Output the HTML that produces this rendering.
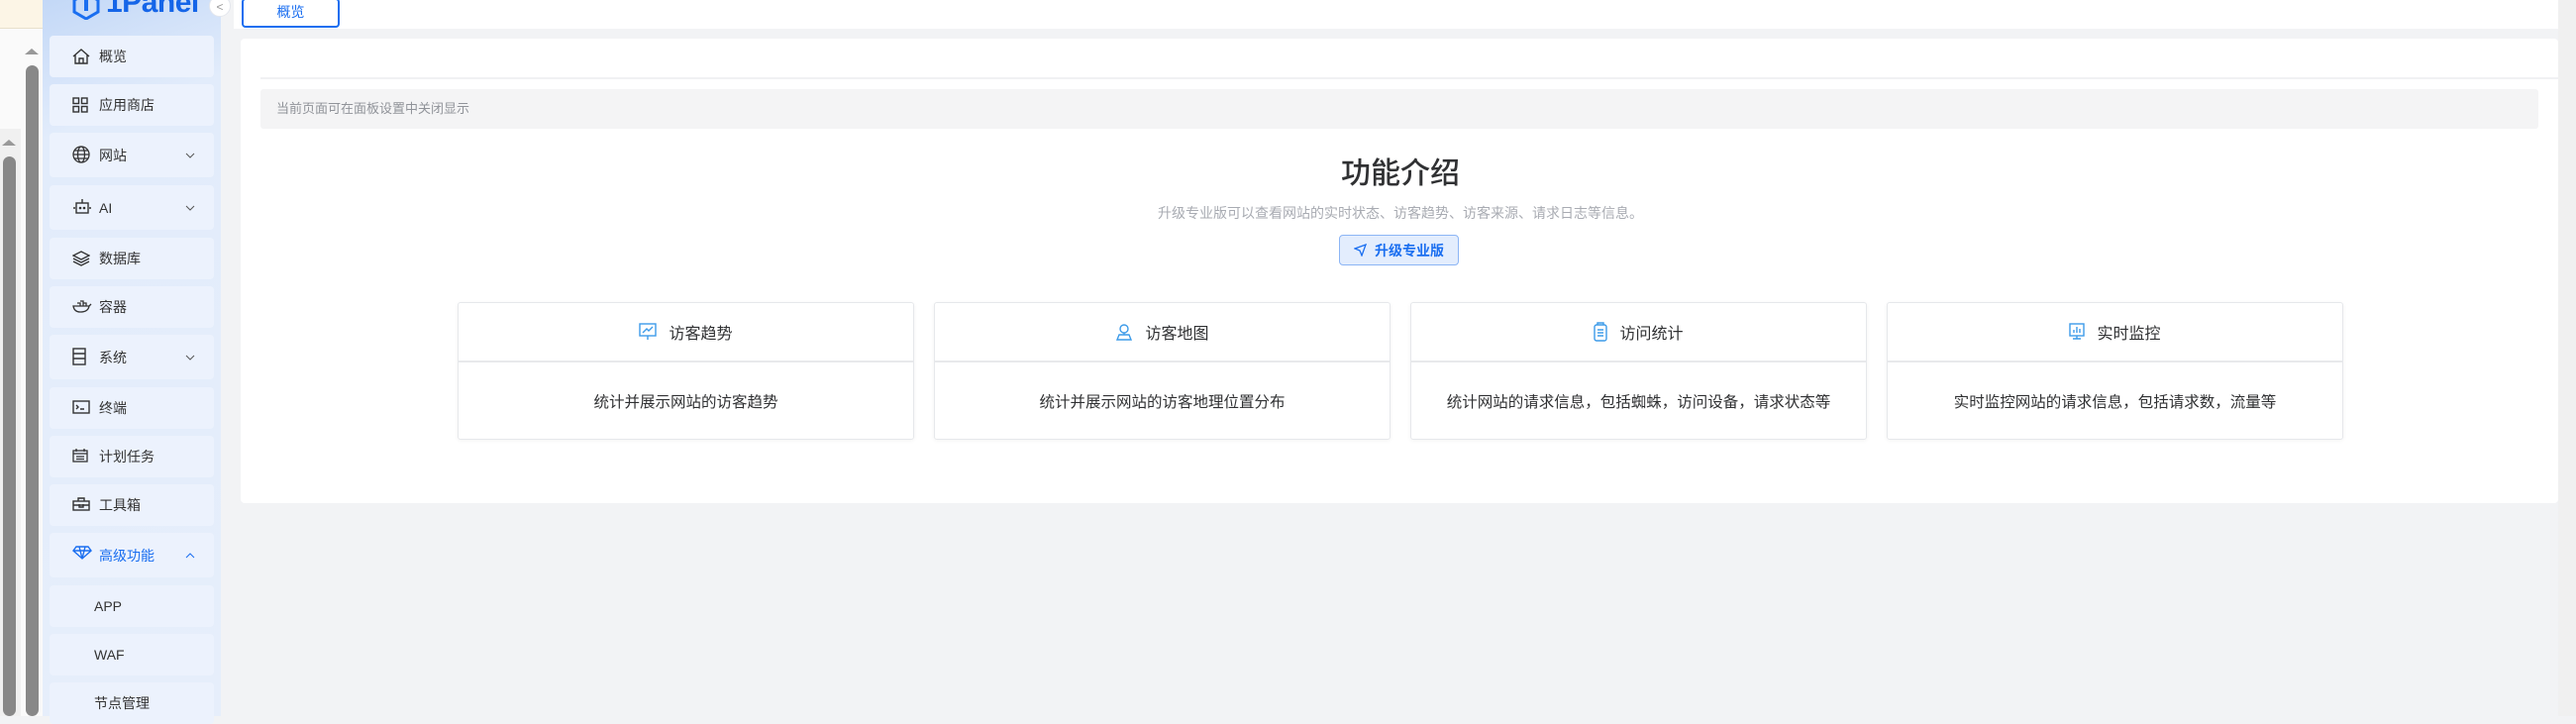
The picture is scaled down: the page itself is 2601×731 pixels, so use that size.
<!DOCTYPE html>
<html><head><meta charset="utf-8"><style>
*{margin:0;padding:0;box-sizing:border-box}
body{width:2601px;height:723px;overflow:hidden;background:#f2f3f5;font-family:"Liberation Sans","Noto Sans CJK SC",sans-serif;position:relative}
.abs{position:absolute}
.side{left:43px;top:0;width:180px;height:723px;background:linear-gradient(160deg,#c3d8f7 0%,#e2ecfb 18%,#e6eefb 100%)}
.item{position:absolute;left:7px;width:166px;height:42px;background:#ecf2fd;border-radius:4px;font-size:14px;color:#333;display:flex;align-items:center}
.item svg{position:absolute;left:23px;top:13px}
.item span{position:absolute;left:50px}
.item svg.chev{position:absolute;left:137px;top:20px}
.card{background:#fff;border:1px solid #e6e8eb;border-radius:3px;box-shadow:0 1px 4px rgba(0,0,0,.05)}
.fc{position:absolute;top:305px;width:461px;height:139px}
.fc .h{height:60px;border-bottom:2px solid #e8e9eb;display:flex;align-items:center;justify-content:center;font-size:16px;color:#303133}
.fc .h svg{margin-right:12px}
.fc .b{height:77px;display:flex;align-items:center;justify-content:center;font-size:15.5px;color:#303133}
</style></head><body>
<div class="abs" style="left:0;top:0;width:43px;height:723px;background:#fafafa"></div>
<div class="abs" style="left:0;top:0;width:43px;height:29px;background:#fcf5e6;border-bottom:1px solid #e8e0cc"></div>
<div class="abs" style="left:0;top:130px;width:21px;height:593px;background:#f0f0f0"></div>
<div class="abs" style="left:3px;top:158px;width:13px;height:565px;background:#888;border-radius:7px"></div>
<div class="abs" style="left:2px;top:141px;width:0;height:0;border-left:7px solid transparent;border-right:7px solid transparent;border-bottom:6px solid #999"></div>
<div class="abs" style="left:26px;top:66px;width:13px;height:657px;background:#888;border-radius:7px"></div>
<div class="abs" style="left:25px;top:49px;width:0;height:0;border-left:7px solid transparent;border-right:7px solid transparent;border-bottom:6px solid #999"></div>
<div class="abs side">
 <svg class="abs" style="left:30px;top:-6px" width="28" height="26" viewBox="0 0 28 26"><path d="M14 0 L26 6 V18 L14 25 L2 18 V6Z" fill="none" stroke="#1a6ef0" stroke-width="3"/><rect x="12" y="5" width="4" height="12" fill="#1a6ef0"/></svg>
 <div class="abs" style="left:64px;top:-14px;font-size:30px;font-weight:bold;color:#1565e8;letter-spacing:-.5px">1Panel</div>
 <div class="item" style="top:36px"><svg width="18" height="16" viewBox="0 0 18 16" fill="none" stroke="#333" stroke-width="1.4"><path d="M1 8L9 1L17 8M3 6V15H15V6M7 15V10H11V15"/></svg><span>概览</span></div>
 <div class="item" style="top:85px"><svg width="16" height="16" viewBox="0 0 16 16" fill="none" stroke="#333" stroke-width="1.4"><rect x="1" y="1" width="5.5" height="5.5"/><rect x="9.5" y="1" width="5.5" height="5.5"/><rect x="1" y="9.5" width="5.5" height="5.5"/><rect x="9.5" y="9.5" width="5.5" height="5.5"/></svg><span>应用商店</span></div>
 <div class="item" style="top:134px;height:45px"><svg width="18" height="18" viewBox="0 0 18 18" fill="none" stroke="#333" stroke-width="1.3"><circle cx="9" cy="9" r="8"/><ellipse cx="9" cy="9" rx="3.5" ry="8"/><path d="M1 9H17M2 5H16M2 13H16"/></svg><span>网站</span><svg class="chev" width="10" height="6" viewBox="0 0 10 6" fill="none" stroke="#555"><path d="M1 1L5 5L9 1"/></svg></div>
 <div class="item" style="top:187px;height:45px"><svg width="20" height="16" viewBox="0 0 20 16" fill="none" stroke="#333" stroke-width="1.4"><rect x="4" y="5" width="12" height="10"/><path d="M10 1V5M1 10H3M17 10H19"/><circle cx="8" cy="10" r=".6" fill="#333"/><circle cx="12" cy="10" r=".6" fill="#333"/></svg><span>AI</span><svg class="chev" width="10" height="6" viewBox="0 0 10 6" fill="none" stroke="#555"><path d="M1 1L5 5L9 1"/></svg></div>
 <div class="item" style="top:240px"><svg width="18" height="16" viewBox="0 0 18 16" fill="none" stroke="#333" stroke-width="1.3"><path d="M9 1L17 5L9 9L1 5Z M1 8L9 12L17 8 M1 11L9 15L17 11"/></svg><span>数据库</span></div>
 <div class="item" style="top:289px"><svg width="20" height="14" viewBox="0 0 20 14" fill="none" stroke="#333" stroke-width="1.3"><path d="M1 7H17Q16 13 8 13Q2 13 1 7ZM5 4H8V7M8 2H11V7M11 4H14V7M17 7L19 5"/></svg><span>容器</span></div>
 <div class="item" style="top:338px;height:45px"><svg width="14" height="18" viewBox="0 0 14 18" fill="none" stroke="#333" stroke-width="1.4"><rect x="1" y="1" width="12" height="16"/><path d="M1 6H13M1 11H13"/></svg><span>系统</span><svg class="chev" width="10" height="6" viewBox="0 0 10 6" fill="none" stroke="#555"><path d="M1 1L5 5L9 1"/></svg></div>
 <div class="item" style="top:391px"><svg width="18" height="14" viewBox="0 0 18 14" fill="none" stroke="#333" stroke-width="1.4"><rect x="1" y="1" width="16" height="12"/><path d="M4 5L6 7L4 9M8 9H12"/></svg><span>终端</span></div>
 <div class="item" style="top:440px"><svg width="16" height="14" viewBox="0 0 16 14" fill="none" stroke="#333" stroke-width="1.3"><rect x="1" y="2" width="14" height="11"/><path d="M1 5H15M4 8H12M4 10.5H12M4 0V3M12 0V3"/></svg><span>计划任务</span></div>
 <div class="item" style="top:489px"><svg width="18" height="14" viewBox="0 0 18 14" fill="none" stroke="#333" stroke-width="1.4"><rect x="1" y="4" width="16" height="9"/><path d="M6 4V1H12V4M1 8H17M7 7V10H11V7"/></svg><span>工具箱</span></div>
 <div class="item" style="top:538px;height:45px;color:#1a6ef0"><svg width="20" height="14" viewBox="0 0 20 14" fill="none" stroke="#1a6ef0" stroke-width="1.4"><path d="M4 1H16L19 5L10 13L1 5Z M1 5H19M7 1L10 13L13 1"/></svg><span>高级功能</span><svg class="chev" width="10" height="6" viewBox="0 0 10 6" fill="none" stroke="#1a6ef0"><path d="M1 5L5 1L9 5"/></svg></div>
 <div class="item" style="top:591px"><span style="left:45px">APP</span></div>
 <div class="item" style="top:640px"><span style="left:45px">WAF</span></div>
 <div class="item" style="top:689px"><span style="left:45px">节点管理</span></div>
</div>
<div class="abs" style="left:211px;top:-5px;width:22px;height:22px;border-radius:50%;background:#fff;border:1px solid #e4e7ed;color:#999;font-size:12px;text-align:center;line-height:22px">&lt;</div>
<div class="abs" style="left:236px;top:0;width:2349px;height:29px;background:#fff"></div>
<div class="abs" style="left:244px;top:-2px;width:99px;height:30px;border:2px solid #1a6ef0;border-radius:4px;background:#fff;color:#1a6ef0;font-size:14px;text-align:center;line-height:24px">概览</div>
<div class="abs" style="left:2583px;top:0;width:18px;height:723px;background:#f0f0f0"></div>
<div class="abs" style="left:243px;top:39px;width:2340px;height:469px;background:#fff;border-radius:4px"></div>
<div class="abs" style="left:263px;top:78px;width:2320px;height:2px;background:#f0f1f3"></div>
<div class="abs" style="left:263px;top:90px;width:2300px;height:40px;background:#f4f4f5;border-radius:3px;font-size:13px;color:#909399;line-height:40px;padding-left:16px">当前页面可在面板设置中关闭显示</div>
<div class="abs" style="left:1214px;top:150px;width:400px;text-align:center;font-size:30px;color:#303133;font-weight:500">功能介绍</div>
<div class="abs" style="left:1014px;top:205px;width:800px;text-align:center;font-size:14px;color:#a8abb2">升级专业版可以查看网站的实时状态、访客趋势、访客来源、请求日志等信息。</div>
<div class="abs" style="left:1352px;top:237px;width:121px;height:31px;border:1px solid #8cb5f5;border-radius:4px;background:#e3edfd;color:#1a6ef0;font-size:14px;font-weight:bold;display:flex;align-items:center;justify-content:center"><svg width="13" height="13" viewBox="0 0 13 13" fill="none" stroke="#1a6ef0" stroke-width="1.3" style="margin-right:8px"><path d="M12 1L1 5L6 7L8 12Z"/></svg>升级专业版</div>
<div class="card fc" style="left:462px"><div class="h"><svg width="18" height="18" viewBox="0 0 18 18" fill="none" stroke="#3d9be9" stroke-width="1.4"><rect x="1" y="1" width="16" height="12"/><path d="M4 10L8 6L10 8L14 4M9 13V17"/></svg>访客趋势</div><div class="b">统计并展示网站的访客趋势</div></div>
<div class="card fc" style="left:943px"><div class="h"><svg width="18" height="18" viewBox="0 0 18 18" fill="none" stroke="#3d9be9" stroke-width="1.4"><circle cx="9" cy="6" r="4"/><path d="M9 10V12M2 17L4 12H14L16 17Z"/></svg>访客地图</div><div class="b">统计并展示网站的访客地理位置分布</div></div>
<div class="card fc" style="left:1424px"><div class="h"><svg width="14" height="20" viewBox="0 0 14 20" fill="none" stroke="#3d9be9" stroke-width="1.4"><rect x="1" y="3" width="12" height="16" rx="2"/><path d="M4 3V1H10V3M4 8H10M4 11H10M4 14H10"/></svg>访问统计</div><div class="b">统计网站的请求信息，包括蜘蛛，访问设备，请求状态等</div></div>
<div class="card fc" style="left:1905px"><div class="h"><svg width="16" height="18" viewBox="0 0 16 18" fill="none" stroke="#3d9be9" stroke-width="1.4"><rect x="1" y="1" width="14" height="12"/><path d="M5 10V7M8 10V4M11 10V6M4 16H12M8 13V16"/></svg>实时监控</div><div class="b">实时监控网站的请求信息，包括请求数，流量等</div></div>
</body></html>
